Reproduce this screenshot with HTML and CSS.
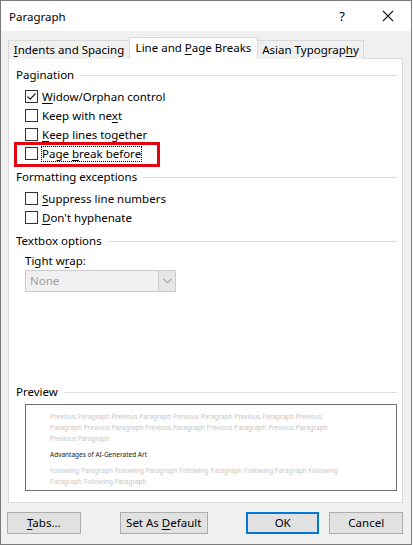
FILE: index.html
```html
<!DOCTYPE html>
<html>
<head>
<meta charset="utf-8">
<link rel="stylesheet" href="styles.css">
</head>
<body>
<div class="window">
  <div class="titlebar">
    <span class="title">Paragraph</span>
    <span class="help">?</span>
    <span class="close"><svg width="12" height="12" viewBox="0 0 12 12"><path d="M1 1L11 11M11 1L1 11" stroke="#1a1a1a" stroke-width="1.1" fill="none"/></svg></span>
  </div>
  <div class="body">
    <div class="tabs">
      <div class="tab"><u>I</u>ndents and Spacing</div>
      <div class="tab active">Line and <u>P</u>age Breaks</div>
      <div class="tab">Asian Typograp<u>h</u>y</div>
    </div>
    <div class="panel">
      <div class="header"><span>Pagination</span><i class="rule"></i></div>
      <div class="row first"><span class="cb checked"><svg width="11" height="11" viewBox="0 0 11 11"><path d="M1.5 5.5L4.2 8.2L9.5 2.5" stroke="#222" stroke-width="1.2" fill="none"/></svg></span><span><u>W</u>idow/Orphan control</span></div>
      <div class="row"><span class="cb"></span><span>Keep with ne<u>x</u>t</span></div>
      <div class="row"><span class="cb"></span><span><u>K</u>eep lines together</span></div>
      <div class="row hl"><span class="cb"></span><span class="focus">Page <u>b</u>reak before</span></div>
      <div class="header sec"><span>Formatting exceptions</span><i class="rule"></i></div>
      <div class="row first"><span class="cb"></span><span><u>S</u>uppress line numbers</span></div>
      <div class="row"><span class="cb"></span><span><u>D</u>on't hyphenate</span></div>
      <div class="header sec"><span>Textbox options</span><i class="rule"></i></div>
      <div class="label">Tight w<u>r</u>ap:</div>
      <div class="select"><span class="val">None</span><span class="arrow"><svg width="9" height="6" viewBox="0 0 9 6"><path d="M0.5 0.8L4.5 4.8L8.5 0.8" stroke="#777" stroke-width="1" fill="none"/></svg></span></div>
      <div class="preview-sec">
        <div class="header"><span>Preview</span><i class="rule"></i></div>
        <div class="preview">
          <div class="pv gray">
            <div>Previous Paragraph Previous Paragraph Previous Paragraph Previous Paragraph Previous</div>
            <div>Paragraph Previous Paragraph Previous Paragraph Previous Paragraph Previous Paragraph</div>
            <div>Previous Paragraph</div>
          </div>
          <div class="pv main"><div>Advantages of AI-Generated Art</div></div>
          <div class="pv gray">
            <div>Following Paragraph Following Paragraph Following Paragraph Following Paragraph Following</div>
            <div>Paragraph Following Paragraph</div>
          </div>
        </div>
      </div>
    </div>
    <div class="buttons">
      <div class="btn b-tabs"><u>T</u>abs...</div>
      <div class="btn b-def">Set As <u>D</u>efault</div>
      <div class="btn b-ok">OK</div>
      <div class="btn b-cancel">Cancel</div>
    </div>
  </div>
</div>
</body>
</html>
```
FILE: styles.css
```css
html, body {
  margin: 0;
  padding: 0;
  background: #ffffff;
}
body {
  font-family: "Noto Sans", "Open Sans", sans-serif;
  font-size: 11.5px;
  color: #000;
}
u {
  text-decoration: underline;
  text-underline-offset: 2px;
}
.window {
  width: 412px;
  height: 545px;
  box-sizing: border-box;
  border: 1px solid #7a7a7a;
  background: #f0f0f0;
  display: flex;
  flex-direction: column;
}
.titlebar {
  height: 30px;
  background: #ffffff;
  display: flex;
  align-items: center;
  padding-left: 8px;
  flex-shrink: 0;
}
.title {
  flex: 1;
  font-size: 11.5px;
}
.help {
  width: 44px;
  text-align: center;
  font-size: 13px;
  margin-right: 1px;
}
.close {
  width: 46px;
  display: flex;
  justify-content: center;
  align-items: center;
}
.body {
  flex: 1;
  display: flex;
  flex-direction: column;
  padding: 7px 8px 0 7px;
}
.tabs {
  display: flex;
  height: 21px;
  align-items: flex-end;
  position: relative;
  z-index: 1;
  margin-bottom: -1px;
}
.tab {
  height: 19px;
  box-sizing: border-box;
  border: 1px solid #d9d9d9;
  border-bottom: none;
  background: #f0f0f0;
  line-height: 18px;
  text-align: center;
  white-space: nowrap;
}
.tab:nth-child(1) { width: 121px; border-right: none; }
.tab:nth-child(3) { width: 106px; border-left: none; }
.tab.active {
  height: 22px;
  width: 129px;
  background: #ffffff;
  line-height: 20px;
}
.panel {
  height: 445px;
  box-sizing: border-box;
  border: 1px solid #d9d9d9;
  background: #ffffff;
  padding: 6px 5px 11px 7px;
  display: flex;
  flex-direction: column;
}
.header {
  display: flex;
  align-items: center;
  height: 19px;
  line-height: 19px;
}
.header .rule {
  flex: 1;
  height: 1px;
  background: #dcdcdc;
  margin-left: 6px;
  margin-top: 1px;
}
.header.sec { margin-top: 4px; }
.row {
  display: flex;
  align-items: center;
  height: 19px;
  padding-left: 9px;
  position: relative;
}
.row.first { margin-top: 3px; }
.cb {
  width: 13px;
  height: 13px;
  box-sizing: border-box;
  border: 1px solid #333333;
  background: #fff;
  margin-right: 4px;
  display: flex;
  align-items: center;
  justify-content: center;
  flex-shrink: 0;
}
.focus {
  outline: 1px dotted #000;
  outline-offset: 0;
  line-height: 14px;
}
.row.hl::after {
  content: "";
  position: absolute;
  left: -2px;
  top: -2px;
  width: 146px;
  height: 25px;
  box-sizing: border-box;
  border: 3px solid #e3000f;
}
.label {
  padding-left: 9px;
  height: 19px;
  line-height: 19px;
  margin-top: 1px;
}
.select {
  margin-left: 9px;
  width: 151px;
  height: 22px;
  box-sizing: border-box;
  border: 1px solid #cccccc;
  background: #f0f0f0;
  display: flex;
}
.select .val {
  flex: 1;
  color: #a0a0a0;
  padding-left: 4px;
  line-height: 20px;
}
.select .arrow {
  width: 16px;
  border-left: 1px solid #cccccc;
  background: #e6e6e6;
  display: flex;
  align-items: center;
  justify-content: center;
}
.preview-sec {
  margin-top: auto;
}
.preview-sec .header { margin-bottom: 3px; }
.preview {
  margin-left: 9px;
  height: 87px;
  box-sizing: border-box;
  border: 1px solid #6e6e6e;
  padding: 6px 0 0 24px;
  font-size: 6.5px;
}
.pv div {
  height: 11px;
  line-height: 11px;
  white-space: nowrap;
}
.pv.gray { color: #c6c6c6; }
.pv.main { color: #222; margin: 5px 0; }
.buttons {
  display: flex;
  margin-top: 9px;
  height: 22px;
}
.btn {
  height: 22px;
  box-sizing: border-box;
  border: 1px solid #adadad;
  background: #e1e1e1;
  text-align: center;
  line-height: 20px;
}
.b-tabs { width: 74px; margin-left: -1px; }
.b-def { width: 89px; margin-left: 39px; }
.b-ok { width: 74px; margin-left: 38px; border: 2px solid #0078d7; line-height: 18px; }
.b-cancel { width: 74px; margin-left: 10px; }
```
